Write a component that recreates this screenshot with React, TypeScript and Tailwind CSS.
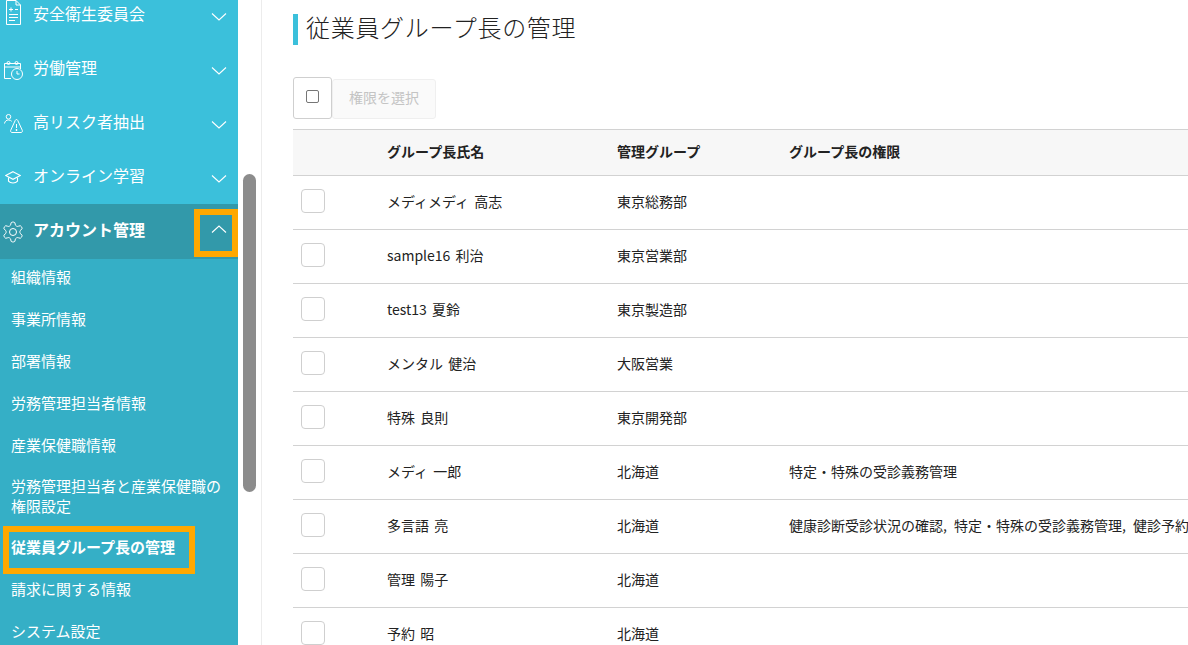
import type { ReactNode } from "react"

const Chevron = ({ up }: { up?: boolean }) => (
  <svg width="16" height="8" viewBox="0 0 16 8" fill="none" stroke="#fff" strokeWidth="1.1">
    <path d={up ? "M1 7.5L8 1L15 7.5" : "M1 0.5L8 7L15 0.5"} />
  </svg>
)

const DocIcon = () => (
  <svg width="15" height="25" viewBox="0 0 15 25" fill="none" stroke="#fff" strokeWidth="1">
    <path d="M0.5 0.5H10L14.5 5V24.5H0.5Z" />
    <path d="M10 0.5V5H14.5" />
    <path d="M3 9.5H7M5 7.5V11.5M9 9.5H12M3 14.5H12M3 17.5H12M3 20.5H9" />
  </svg>
)

const CalendarIcon = () => (
  <svg width="19" height="19" viewBox="0 0 19 19" fill="none" stroke="#fff" strokeWidth="1">
    <path d="M7 17.5H0.5V2.5H16.5V8" />
    <path d="M0.5 6H16.5" />
    <circle cx="4.5" cy="2" r="1.5" />
    <circle cx="12.5" cy="2" r="1.5" />
    <circle cx="13" cy="13" r="5.5" />
    <path d="M13 10V13H15.5" />
  </svg>
)

const RiskIcon = () => (
  <svg width="19" height="19" viewBox="0 0 19 19" fill="none" stroke="#fff" strokeWidth="1">
    <circle cx="4.5" cy="2.8" r="2.3" />
    <path d="M0.5 9.5C1 7 2.5 6 4.5 6C6 6 7 6.5 7.7 7.3" />
    <path d="M12.5 5.5C13 5.5 13.4 5.8 13.7 6.3L18.3 16.3C18.7 17.2 18.2 18.5 17 18.5H8C6.8 18.5 6.3 17.2 6.7 16.3L11.3 6.3C11.6 5.8 12 5.5 12.5 5.5Z" />
    <path d="M12.5 10V14" />
    <path d="M12.5 15V17" strokeWidth="1.4" />
  </svg>
)

const CapIcon = () => (
  <svg width="16" height="13" viewBox="0 0 16 13" fill="none" stroke="#fff" strokeWidth="1.1">
    <path d="M8 0.7L15.3 4.5L8 8.3L0.7 4.5Z" />
    <path d="M3.5 6.5V10.2C5.5 12.6 10.5 12.6 12.5 10.2V6.5" />
  </svg>
)

const GearIcon = () => (
  <svg width="24" height="24" viewBox="0 0 24 24" fill="none" stroke="#fff" strokeWidth="1">
    <path d="M12.22 2h-.44a2 2 0 0 0-2 2v.18a2 2 0 0 1-1 1.73l-.43.25a2 2 0 0 1-2 0l-.15-.08a2 2 0 0 0-2.73.73l-.22.38a2 2 0 0 0 .73 2.73l.15.1a2 2 0 0 1 1 1.72v.51a2 2 0 0 1-1 1.74l-.15.09a2 2 0 0 0-.73 2.73l.22.38a2 2 0 0 0 2.73.73l.15-.08a2 2 0 0 1 2 0l.43.25a2 2 0 0 1 1 1.73V20a2 2 0 0 0 2 2h.44a2 2 0 0 0 2-2v-.18a2 2 0 0 1 1-1.73l.43-.25a2 2 0 0 1 2 0l.15.08a2 2 0 0 0 2.73-.73l.22-.39a2 2 0 0 0-.73-2.73l-.15-.08a2 2 0 0 1-1-1.74v-.5a2 2 0 0 1 1-1.74l.15-.09a2 2 0 0 0 .73-2.73l-.22-.38a2 2 0 0 0-2.73-.73l-.15.08a2 2 0 0 1-2 0l-.43-.25a2 2 0 0 1-1-1.73V4a2 2 0 0 0-2-2z" />
    <circle cx="12" cy="12" r="3.5" />
  </svg>
)

const MenuItem = ({ icon, label, iconClass }: { icon: ReactNode; label: string; iconClass: string }) => (
  <div className="h-[54px] flex items-center text-white text-[16px]">
    <span className={`w-[33px] flex justify-center pr-[7px] shrink-0 ${iconClass}`}>{icon}</span>
    <span className="flex-1 pb-[4px]">{label}</span>
    <span className="w-[38px] flex justify-center shrink-0 mt-[3px]">
      <Chevron />
    </span>
  </div>
)

const subItems = [
  "組織情報",
  "事業所情報",
  "部署情報",
  "労務管理担当者情報",
  "産業保健職情報",
  "労務管理担当者と産業保健職の権限設定",
  "従業員グループ長の管理",
  "請求に関する情報",
  "システム設定",
]

const rows = [
  { name: "メディメディ 高志", group: "東京総務部", role: "" },
  { name: "sample16 利治", group: "東京営業部", role: "" },
  { name: "test13 夏鈴", group: "東京製造部", role: "" },
  { name: "メンタル 健治", group: "大阪営業", role: "" },
  { name: "特殊 良則", group: "東京開発部", role: "" },
  { name: "メディ 一郎", group: "北海道", role: "特定・特殊の受診義務管理" },
  {
    name: "多言語 亮",
    group: "北海道",
    role: "健康診断受診状況の確認, 特定・特殊の受診義務管理, 健診予約サイトの管理",
  },
  { name: "管理 陽子", group: "北海道", role: "" },
  { name: "予約 昭", group: "北海道", role: "" },
]

export default function App() {
  return (
    <div className="h-[645px] w-[1188px] overflow-hidden flex bg-white text-[#222] [font-family:'Noto_Sans_CJK_JP','Liberation_Sans',sans-serif]">
      {/* sidebar */}
      <aside className="w-[238px] shrink-0 bg-[#3bc0db]">
        <div className="-mt-[12px]">
          <MenuItem icon={<DocIcon />} label="安全衛生委員会" iconClass="mb-[5px]" />
          <MenuItem icon={<CalendarIcon />} label="労働管理" iconClass="mt-[2px]" />
          <MenuItem icon={<RiskIcon />} label="高リスク者抽出" iconClass="" />
          <MenuItem icon={<CapIcon />} label="オンライン学習" iconClass="" />
        </div>
        <div className="relative h-[55px] flex items-center bg-[#3299aa] text-white text-[16px] font-bold">
          <span className="w-[33px] flex justify-center pr-[7px] shrink-0">
            <GearIcon />
          </span>
          <span className="flex-1 pb-[5px]">アカウント管理</span>
          <span className="w-[38px] flex justify-center shrink-0 mb-[5px]">
            <Chevron up />
          </span>
          <div className="absolute left-[194px] top-[5px] h-[48px] w-[44px] border-[6px] border-[#ffa800]" />
        </div>
        <div className="bg-[#35afc6] pb-10">
          {subItems.map((s, i) => (
            <div
              key={s}
              className={`relative flex items-center pl-[11px] pr-[8px] pb-[6px] text-[15px] leading-[20px] text-white ${
                s.length > 15 ? "h-[60px]" : "h-[42px]"
              } ${i === 6 ? "font-bold" : ""}`}
            >
              {s}
              {i === 6 && (
                <div className="absolute left-[3px] top-[-3px] h-[48px] w-[192px] border-[6px] border-[#ffa800]" />
              )}
            </div>
          ))}
        </div>
      </aside>

      {/* scrollbar */}
      <div className="w-[24px] shrink-0 border-r border-[#ececec] bg-white pl-[5px] pt-[174px]">
        <div className="h-[318px] w-[13px] rounded-full bg-[#8c8c8c]" />
      </div>

      {/* main */}
      <main className="flex-1 min-w-0 pl-[31px] pt-[14px]">
        <h1 className="h-[31px] flex items-center border-l-[5px] border-[#3bc0db] pl-[8px] pb-[6px] text-[24px] font-light tracking-[0.7px] text-[#222] whitespace-nowrap">
          従業員グループ長の管理
        </h1>

        <div className="mt-[32px] flex items-end">
          <div className="h-[42px] w-[39px] flex items-center justify-center rounded-[3px] border border-[#cfcfcf] bg-white pb-[4px]">
            <span className="h-[13px] w-[13px] rounded-[2px] border border-[#767676] bg-white" />
          </div>
          <div className="h-[40px] w-[104px] flex items-center justify-center rounded-[3px] border border-[#efefef] bg-[#fafafa] pb-[4px] text-[14px] text-[#c4c4c4]">
            権限を選択
          </div>
        </div>

        <div className="mt-[10px]">
          <div className="h-[47px] flex items-center border-y border-[#d2d2d2] bg-[#f7f7f7] pb-[2px] text-[14px] font-bold">
            <span className="w-[94px] shrink-0" />
            <span className="w-[230px] shrink-0">グループ長氏名</span>
            <span className="w-[172px] shrink-0">管理グループ</span>
            <span>グループ長の権限</span>
          </div>
          {rows.map((r) => (
            <div
              key={r.name}
              className="h-[54px] flex items-center border-b border-[#d2d2d2] pb-[2px] text-[14px]"
            >
              <span className="w-[94px] shrink-0 pl-[8px] pb-[2px]">
                <span className="block h-[24px] w-[24px] rounded-[4px] border border-[#cfcfcf] bg-white" />
              </span>
              <span className="w-[230px] shrink-0 [word-spacing:2px]">{r.name}</span>
              <span className="w-[172px] shrink-0">{r.group}</span>
              <span className="whitespace-nowrap [word-spacing:4px]">{r.role}</span>
            </div>
          ))}
        </div>
      </main>
    </div>
  )
}
